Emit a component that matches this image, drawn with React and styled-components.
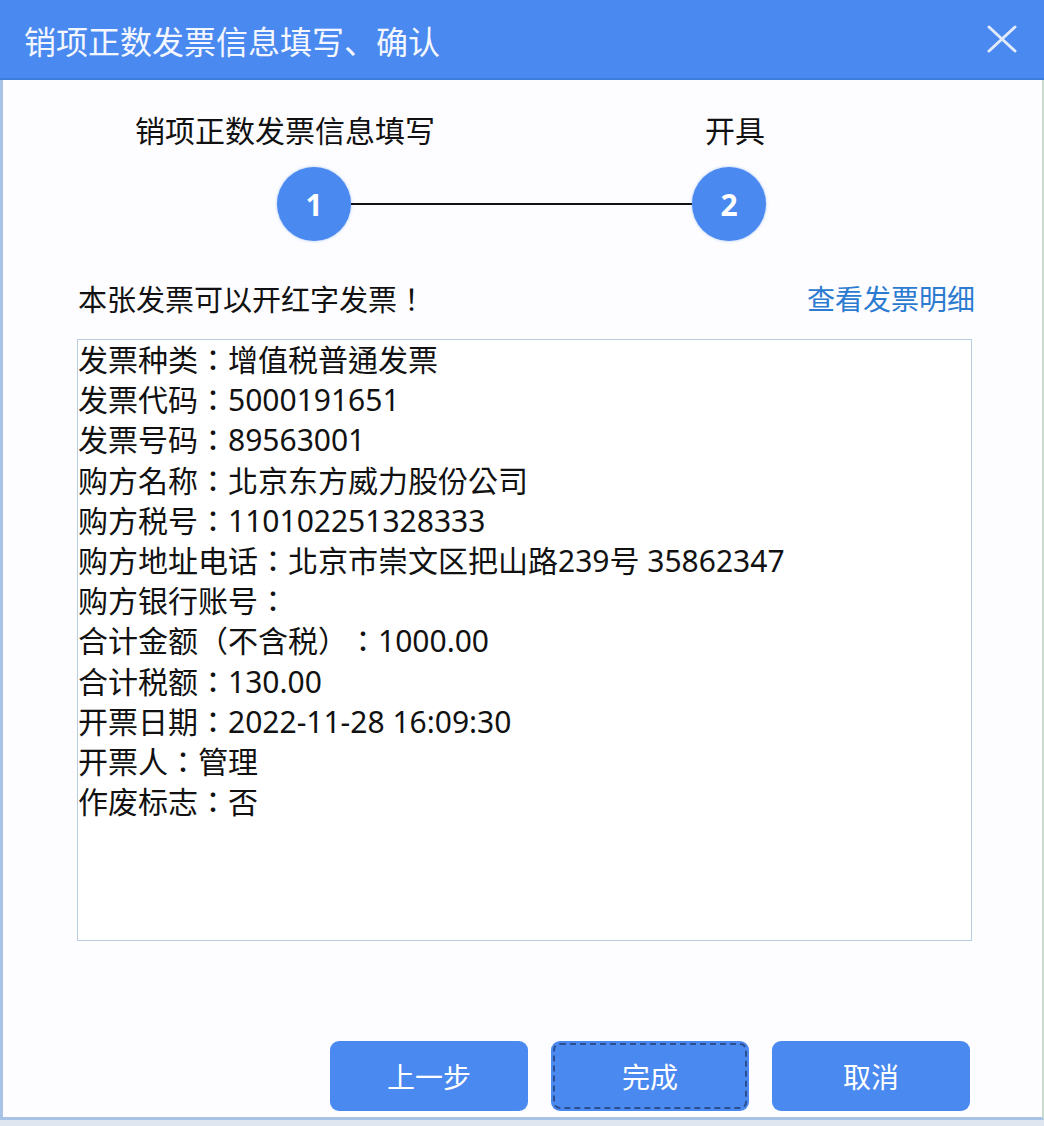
import React from "react";
import styled, { createGlobalStyle } from "styled-components";

const Global = createGlobalStyle`
  html, body {
    margin: 0;
    padding: 0;
    background: #dfe6ef;
  }
  body {
    font-family: "Noto Sans", "Noto Sans CJK SC", sans-serif;
    text-spacing-trim: space-all;
  }
`;

// full-width punctuation sits centred in its cell, as in the original UI font
const centredPunct = `"Noto Sans", "Noto Sans CJK TC", "Noto Sans CJK SC", sans-serif`;

const Dialog = styled.div`
  width: 1044px;
  height: 1120px;
  box-sizing: border-box;
  display: flex;
  flex-direction: column;
  background: #fdfdff;
  border-left: 3px solid #a8c3e6;
  border-bottom: 3px solid #a8c3e6;
  border-right: 2px solid #c8dccf;
`;

const Header = styled.div`
  height: 80px;
  box-sizing: border-box;
  flex-shrink: 0;
  display: flex;
  align-items: center;
  justify-content: space-between;
  padding: 0 26px 0 21px;
  margin-left: -3px;
  margin-right: -2px;
  background: #4a89ef;
  border-bottom: 2px solid #3f7ddd;
  color: #fff;
  font-size: 32px;
`;

const Title = styled.span`
  padding-left: 3px;
  color: #f4f7ff;
  margin-top: 2px;
`;

const CloseBtn = styled.button`
  border: none;
  background: none;
  padding: 0;
  width: 32px;
  height: 32px;
  display: flex;
  align-items: center;
  justify-content: center;
  cursor: pointer;
`;

const Body = styled.div`
  flex: 1;
  display: flex;
  flex-direction: column;
  padding: 30px 70px 6px 74px;
`;

const StepLabels = styled.div`
  display: flex;
  height: 38px;
  align-items: center;
  font-size: 30px;
  color: #111;
`;

const StepLabel = styled.div`
  margin-left: ${(p) => p.$offset}px;
  white-space: nowrap;
`;

const Track = styled.div`
  display: flex;
  align-items: center;
  margin-top: 19px;
  padding-left: 200px;
`;

const Circle = styled.div`
  width: 74px;
  height: 74px;
  border-radius: 50%;
  background: #4a89ef;
  box-shadow: 0 0 3px rgba(74, 137, 239, 0.5);
  color: #fff;
  font-size: 30px;
  font-weight: 700;
  display: flex;
  align-items: center;
  justify-content: center;
  flex-shrink: 0;
`;

const Line = styled.div`
  width: 341px;
  height: 2px;
  background: #111;
`;

const MessageRow = styled.div`
  display: flex;
  justify-content: space-between;
  align-items: center;
  margin-top: 39px;
  height: 36px;
`;

const Message = styled.span`
  font-family: ${centredPunct};
  font-size: 29px;
  color: #111;
  padding-left: 1px;
`;

const DetailLink = styled.a`
  font-size: 28px;
  color: #2b7bd1;
  text-decoration: none;
  cursor: pointer;
  margin-right: -3px;
`;

const InfoBox = styled.div`
  margin-top: 23px;
  height: 602px;
  box-sizing: border-box;
  border: 1px solid #b9cde2;
  background: #fff;
  width: 895px;
`;

const InfoLine = styled.div`
  font-family: ${centredPunct};
  font-size: 30px;
  line-height: 40.2px;
  color: #111;
  white-space: nowrap;
  text-spacing-trim: space-all;
`;

const Footer = styled.div`
  margin-top: auto;
  display: flex;
  justify-content: flex-end;
  gap: 23px;
  padding-right: 2px;
`;

const ActionButton = styled.button`
  width: 198px;
  height: 70px;
  border: none;
  border-radius: 9px;
  background: #4a89ef;
  color: #fff;
  font-family: inherit;
  font-size: 28px;
  cursor: pointer;
  outline: ${(p) => (p.$focused ? "2px dashed #2c4e8e" : "none")};
  outline-offset: -4px;
`;

const rows = [
  "发票种类：增值税普通发票",
  "发票代码：5000191651",
  "发票号码：89563001",
  "购方名称：北京东方威力股份公司",
  "购方税号：110102251328333",
  "购方地址电话：北京市崇文区把山路239号 35862347",
  "购方银行账号：",
  "合计金额（不含税）：1000.00",
  "合计税额：130.00",
  "开票日期：2022-11-28 16:09:30",
  "开票人：管理",
  "作废标志：否",
];

export default function App() {
  return (
    <>
      <Global />
      <Dialog>
        <Header>
          <Title>销项正数发票信息填写、确认</Title>
          <CloseBtn aria-label="关闭">
            <svg width="30" height="28" viewBox="0 0 30 28">
              <path
                d="M2 2 L28 26 M28 2 L2 26"
                stroke="#e3ebfb"
                strokeWidth="3"
                strokeLinecap="round"
              />
            </svg>
          </CloseBtn>
        </Header>
        <Body>
          <StepLabels>
            <StepLabel $offset={58}>销项正数发票信息填写</StepLabel>
            <StepLabel $offset={270}>开具</StepLabel>
          </StepLabels>
          <Track>
            <Circle>1</Circle>
            <Line />
            <Circle>2</Circle>
          </Track>
          <MessageRow>
            <Message>本张发票可以开红字发票！</Message>
            <DetailLink>查看发票明细</DetailLink>
          </MessageRow>
          <InfoBox>
            {rows.map((r) => (
              <InfoLine key={r}>{r}</InfoLine>
            ))}
          </InfoBox>
          <Footer>
            <ActionButton>上一步</ActionButton>
            <ActionButton $focused>完成</ActionButton>
            <ActionButton>取消</ActionButton>
          </Footer>
        </Body>
      </Dialog>
    </>
  );
}
